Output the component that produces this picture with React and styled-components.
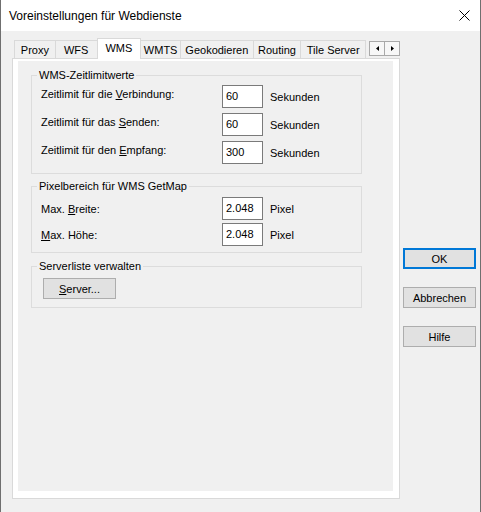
import React from 'react';
import styled, { createGlobalStyle } from 'styled-components';

const Global = createGlobalStyle`
  html, body {
    margin: 0;
    padding: 0;
    background: #f0f0f0;
  }
  body {
    font-family: "Liberation Sans", Arial, sans-serif;
    font-size: 11px;
    color: #000;
  }
`;

const Window = styled.div`
  width: 481px;
  height: 512px;
  box-sizing: border-box;
  border-left: 1px solid #6f6f6f;
  border-right: 1px solid #6f6f6f;
  background: #f0f0f0;
  overflow: hidden;
`;

const TitleBar = styled.div`
  height: 31px;
  background: #fff;
  display: flex;
  align-items: center;
  justify-content: space-between;
  padding: 0 10px 0 8px;
  box-sizing: border-box;
  font-size: 12px;
`;

const Body = styled.div`
  display: flex;
  align-items: flex-start;
`;

const LeftCol = styled.div`
  margin-left: 11px;
  margin-top: 7px;
  width: 388px;
`;

const TabStrip = styled.div`
  display: flex;
  align-items: flex-end;
  height: 21px;
  padding-left: 2px;
  position: relative;
  z-index: 1;
`;

const Tab = styled.div`
  box-sizing: border-box;
  width: ${p => p.w}px;
  height: ${p => (p.active ? 21 : 19)}px;
  margin-left: -1px;
  &:first-child { margin-left: 0; }
  border: 1px solid #d9d9d9;
  border-bottom: ${p => (p.active ? 'none' : '1px solid #d9d9d9')};
  background: ${p => (p.active ? '#fff' : '#f0f0f0')};
  position: relative;
  z-index: ${p => (p.active ? 2 : 1)};
  display: flex;
  align-items: center;
  justify-content: center;
  padding-bottom: ${p => (p.active ? 3 : 0)}px;
  white-space: nowrap;
`;

const Scroller = styled.div`
  display: flex;
  margin-left: 3px;
  margin-bottom: 3px;
`;

const ScrollBtn = styled.div`
  box-sizing: border-box;
  width: 16px;
  height: 15px;
  border: 1px solid #a9a9a9;
  background: #f7f7f7;
  margin-left: -1px;
  &:first-child { margin-left: 0; }
  display: flex;
  align-items: center;
  justify-content: center;
`;

const Panel = styled.div`
  box-sizing: border-box;
  width: 388px;
  height: 441px;
  margin-top: -1px;
  border: 1px solid #d9d9d9;
  background: #fff;
  padding: 2px 6px 7px 5px;
`;

const Page = styled.div`
  height: 100%;
  background: #f0f0f0;
  padding: 6px 0 0 13px;
  box-sizing: border-box;
`;

const Group = styled.fieldset`
  box-sizing: border-box;
  width: 331px;
  margin: ${p => p.mt || 0}px 0 0 0;
  border: 1px solid #dcdcdc;
  padding: ${p => p.pt}px 0 ${p => p.pb}px 9px;
  min-inline-size: 0;
`;

const Legend = styled.legend`
  padding: 0 2px;
  margin-left: -4px;
  line-height: 16px;
`;

const Rows = styled.div`
  display: grid;
  grid-template-columns: 181px 41px auto;
  row-gap: ${p => p.gap}px;
`;

const Label = styled.div`
  line-height: 16px;
  align-self: ${p => (p.center ? 'center' : 'start')};
  margin-top: ${p => (p.center ? 0 : 1)}px;
`;

const Field = styled.div`
  box-sizing: border-box;
  height: 23px;
  border: 1px solid #7a7a7a;
  background: #fff;
  padding: 0 3px 1px;
  display: flex;
  align-items: center;
`;

const Unit = styled.div`
  margin-left: 7px;
  line-height: 16px;
  align-self: ${p => (p.center ? 'center' : 'start')};
  margin-top: ${p => (p.center ? 0 : 4)}px;
`;

const Button = styled.div`
  box-sizing: border-box;
  width: 73px;
  height: 21px;
  background: #e1e1e1;
  border: ${p => (p.primary ? '2px solid #0078d7' : '1px solid #adadad')};
  display: flex;
  align-items: center;
  justify-content: center;
  margin-left: ${p => p.ml || 0}px;
`;

const RightCol = styled.div`
  margin-left: 3px;
  padding-top: 217px;
  display: flex;
  flex-direction: column;
  gap: 18px;
`;

const tabs = [
  ['Proxy', 42],
  ['WFS', 43],
  ['WMS', 45, true],
  ['WMTS', 41],
  ['Geokodieren', 74],
  ['Routing', 49],
  ['Tile Server', 66],
];

const timeouts = [
  ['Zeitlimit für die ', 'V', 'erbindung:', '60'],
  ['Zeitlimit für das ', 'S', 'enden:', '60'],
  ['Zeitlimit für den ', 'E', 'mpfang:', '300'],
];

const sizes = [
  ['Max. ', 'B', 'reite:', '2.048'],
  ['', 'M', 'ax. Höhe:', '2.048'],
];

export default function App() {
  return (
    <>
      <Global />
      <Window>
        <TitleBar>
          <span>Voreinstellungen für Webdienste</span>
          <svg width="11" height="11" viewBox="0 0 11 11">
            <path d="M0.5 0.5 L10.5 10.5 M10.5 0.5 L0.5 10.5" stroke="#000" strokeWidth="1" />
          </svg>
        </TitleBar>
        <Body>
          <LeftCol>
            <TabStrip>
              {tabs.map(([name, w, active]) => (
                <Tab key={name} w={w} active={active}>{name}</Tab>
              ))}
              <Scroller>
                <ScrollBtn>
                  <svg width="3" height="5" viewBox="0 0 3 5"><path d="M3 0 L0 2.5 L3 5 Z" fill="#000" /></svg>
                </ScrollBtn>
                <ScrollBtn>
                  <svg width="3" height="5" viewBox="0 0 3 5"><path d="M0 0 L3 2.5 L0 5 Z" fill="#000" /></svg>
                </ScrollBtn>
              </Scroller>
            </TabStrip>
            <Panel>
              <Page>
                <Group pt={2} pb={9}>
                  <Legend>WMS-Zeitlimitwerte</Legend>
                  <Rows gap={5}>
                    {timeouts.map(([a, u, b, v]) => (
                      <React.Fragment key={a}>
                        <Label>{a}<u>{u}</u>{b}</Label>
                        <Field>{v}</Field>
                        <Unit>Sekunden</Unit>
                      </React.Fragment>
                    ))}
                  </Rows>
                </Group>
                <Group mt={4} pt={3} pb={6}>
                  <Legend>Pixelbereich für WMS GetMap</Legend>
                  <Rows gap={3}>
                    {sizes.map(([a, u, b, v]) => (
                      <React.Fragment key={b}>
                        <Label center>{a}<u>{u}</u>{b}</Label>
                        <Field>{v}</Field>
                        <Unit center>Pixel</Unit>
                      </React.Fragment>
                    ))}
                  </Rows>
                </Group>
                <Group mt={5} pt={4} pb={8}>
                  <Legend>Serverliste verwalten</Legend>
                  <Button ml={2}><span><u>S</u>erver...</span></Button>
                </Group>
              </Page>
            </Panel>
          </LeftCol>
          <RightCol>
            <Button primary>OK</Button>
            <Button>Abbrechen</Button>
            <Button>Hilfe</Button>
          </RightCol>
        </Body>
      </Window>
    </>
  );
}
